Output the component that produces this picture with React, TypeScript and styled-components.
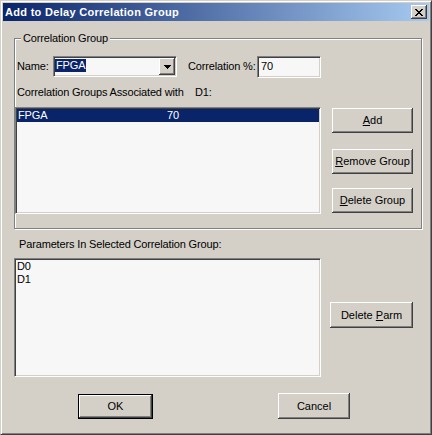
import * as React from 'react';
import styled, { createGlobalStyle } from 'styled-components';

const GlobalStyle = createGlobalStyle`
    html, body {
        margin: 0;
        padding: 0;
        background: #d4d0c8;
    }
`;

const FACE = '#d4d0c8';
const SHADOW = '#808080';
const DARK = '#404040';
const NAVY = '#0a246a';

const Window = styled.div`
    width: 432px;
    height: 435px;
    box-sizing: border-box;
    background: ${FACE};
    border: 1px solid;
    border-color: ${FACE} ${DARK} ${DARK} ${FACE};
    box-shadow: inset 1px 1px #fff, inset -1px -1px ${SHADOW};
    padding: 2px;
    display: flex;
    flex-direction: column;
    font-family: 'Liberation Sans', Arial, sans-serif;
    font-size: 11px;
    line-height: 13px;
    letter-spacing: -0.15px;
    color: #000;
`;

const TitleBar = styled.div`
    height: 18px;
    display: flex;
    align-items: center;
    padding: 0 2px;
    background: linear-gradient(to right, ${NAVY}, #a6caf0);
    color: #fff;
    font-weight: bold;
    letter-spacing: 0.3px;
`;

const TitleText = styled.div`
    flex: 1;
    white-space: nowrap;
`;

const CloseButton = styled.div`
    width: 16px;
    height: 14px;
    box-sizing: border-box;
    background: ${FACE};
    display: flex;
    align-items: center;
    justify-content: center;
    box-shadow: inset -1px -1px ${DARK}, inset 1px 1px #fff, inset -2px -2px ${SHADOW};
`;

const Body = styled.div`
    flex: 1;
    padding: 0 0 0 11px;
    display: flex;
    flex-direction: column;
`;

const GroupBox = styled.div`
    position: relative;
    margin-top: 17px;
    width: 408px;
    height: 191px;
    box-sizing: border-box;
    border: 1px solid ${SHADOW};
    box-shadow: inset 1px 1px #fff, 1px 1px #fff;
    display: flex;
    flex-direction: column;
    padding-top: 17px;
`;

const Legend = styled.div`
    position: absolute;
    top: -7px;
    left: 6px;
    padding: 0 2px;
    background: ${FACE};
`;

const Row = styled.div<{ $top?: number; $left?: number }>`
    display: flex;
    align-items: flex-start;
    margin-top: ${(p) => p.$top ?? 0}px;
    padding-left: ${(p) => p.$left ?? 0}px;
`;

const Label = styled.span<{ $w?: number; $ml?: number; $mt?: number }>`
    display: inline-block;
    white-space: nowrap;
    width: ${(p) => (p.$w ? `${p.$w}px` : 'auto')};
    margin-left: ${(p) => p.$ml ?? 0}px;
    margin-top: ${(p) => p.$mt ?? 0}px;
`;

const Sunken = styled.div<{ $w: number; $h: number }>`
    width: ${(p) => p.$w}px;
    height: ${(p) => p.$h}px;
    box-sizing: border-box;
    background: #f7f7f7;
    border: 1px solid;
    border-color: ${SHADOW} #fff #fff ${SHADOW};
    box-shadow: inset 1px 1px ${DARK}, inset -1px -1px ${FACE};
    padding: 1px;
`;

const Combo = styled(Sunken)`
    display: flex;
    align-items: flex-start;
    justify-content: space-between;
`;

const SelectedText = styled.span`
    margin-top: 1px;
    padding: 0 1px;
    background: ${NAVY};
    color: #fff;
`;

const DropButton = styled.div`
    width: 16px;
    height: 17px;
    box-sizing: border-box;
    background: ${FACE};
    display: flex;
    align-items: center;
    justify-content: center;
    box-shadow: inset -1px -1px ${DARK}, inset 1px 1px #fff, inset -2px -2px ${SHADOW};
`;

const EditText = styled.div`
    padding: 2px 0 0 2px;
`;

const ListBox = styled(Sunken)`
    display: flex;
    flex-direction: column;
`;

const ListRow = styled.div<{ $selected?: boolean }>`
    display: flex;
    height: 13px;
    padding-left: 1px;
    background: ${(p) => (p.$selected ? NAVY : 'transparent')};
    color: ${(p) => (p.$selected ? '#fff' : '#000')};
`;

const Cell = styled.span<{ $w?: number }>`
    width: ${(p) => (p.$w ? `${p.$w}px` : 'auto')};
`;

const ButtonColumn = styled.div`
    display: flex;
    flex-direction: column;
    margin-left: 11px;
`;

const Button = styled.button<{ $w: number; $h: number; $mt?: number; $ml?: number; $default?: boolean }>`
    width: ${(p) => p.$w}px;
    height: ${(p) => p.$h}px;
    margin: ${(p) => p.$mt ?? 0}px 0 0 ${(p) => p.$ml ?? 0}px;
    padding: 0;
    box-sizing: border-box;
    background: ${FACE};
    border: ${(p) => (p.$default ? '1px solid #000' : 'none')};
    box-shadow: inset -1px -1px ${DARK}, inset 1px 1px #fff, inset -2px -2px ${SHADOW};
    font: inherit;
    letter-spacing: 0;
    color: #000;
    text-align: center;
    cursor: default;
`;

const ButtonRow = styled.div`
    display: flex;
    align-items: flex-start;
    margin-top: 16px;
`;

const CloseIcon = () => (
    <svg width="8" height="7" viewBox="0 0 8 7" shapeRendering="crispEdges">
        <path
            d="M0 0h2v1h-2zM1 1h2v1h-2zM2 2h4v1h-4zM3 3h2v1h-2zM2 4h4v1h-4zM1 5h2v1h-2zM0 6h2v1h-2zM6 0h2v1h-2zM5 1h2v1h-2zM5 5h2v1h-2zM6 6h2v1h-2z"
            fill="#000"
        />
    </svg>
);

const ArrowIcon = () => (
    <svg width="7" height="4" viewBox="0 0 7 4" shapeRendering="crispEdges">
        <path d="M0 0h7v1h-7zM1 1h5v1h-5zM2 2h3v1h-3zM3 3h1v1h-1z" fill="#000" />
    </svg>
);

export default function App() {
    const groups = [{ name: 'FPGA', pct: '70' }];
    const params = ['D0', 'D1'];

    return (
        <>
            <GlobalStyle />
            <Window>
                <TitleBar>
                    <TitleText>Add to Delay Correlation Group</TitleText>
                    <CloseButton>
                        <CloseIcon />
                    </CloseButton>
                </TitleBar>
                <Body>
                    <GroupBox>
                        <Legend>Correlation Group</Legend>
                        <Row $left={2}>
                            <Label $w={36} $mt={4}>
                                Name:
                            </Label>
                            <Combo $w={124} $h={21}>
                                <SelectedText>FPGA</SelectedText>
                                <DropButton>
                                    <ArrowIcon />
                                </DropButton>
                            </Combo>
                            <Label $w={69} $ml={11} $mt={4}>
                                Correlation %:
                            </Label>
                            <Sunken $w={64} $h={22}>
                                <EditText>70</EditText>
                            </Sunken>
                        </Row>
                        <Row $top={8} $left={2}>
                            <Label $w={178}>Correlation Groups Associated with</Label>
                            <Label>D1:</Label>
                        </Row>
                        <Row $top={8}>
                            <ListBox $w={306} $h={107}>
                                {groups.map((g) => (
                                    <ListRow key={g.name} $selected>
                                        <Cell $w={149}>{g.name}</Cell>
                                        <Cell>{g.pct}</Cell>
                                    </ListRow>
                                ))}
                            </ListBox>
                            <ButtonColumn>
                                <Button $w={81} $h={25} $mt={1}>
                                    <u>A</u>dd
                                </Button>
                                <Button $w={81} $h={25} $mt={16}>
                                    <u>R</u>emove Group
                                </Button>
                                <Button $w={81} $h={25} $mt={14}>
                                    <u>D</u>elete Group
                                </Button>
                            </ButtonColumn>
                        </Row>
                    </GroupBox>
                    <Row $top={9} $left={5}>
                        <Label>Parameters In Selected Correlation Group:</Label>
                    </Row>
                    <Row $top={7}>
                        <ListBox $w={307} $h={119}>
                            {params.map((p) => (
                                <ListRow key={p}>
                                    <Cell>{p}</Cell>
                                </ListRow>
                            ))}
                        </ListBox>
                        <Button $w={83} $h={26} $mt={44} $ml={9}>
                            Delete <u>P</u>arm
                        </Button>
                    </Row>
                    <ButtonRow>
                        <Button $w={75} $h={25} $mt={1} $ml={64} $default>
                            OK
                        </Button>
                        <Button $w={72} $h={26} $ml={125}>
                            Cancel
                        </Button>
                    </ButtonRow>
                </Body>
            </Window>
        </>
    );
}
